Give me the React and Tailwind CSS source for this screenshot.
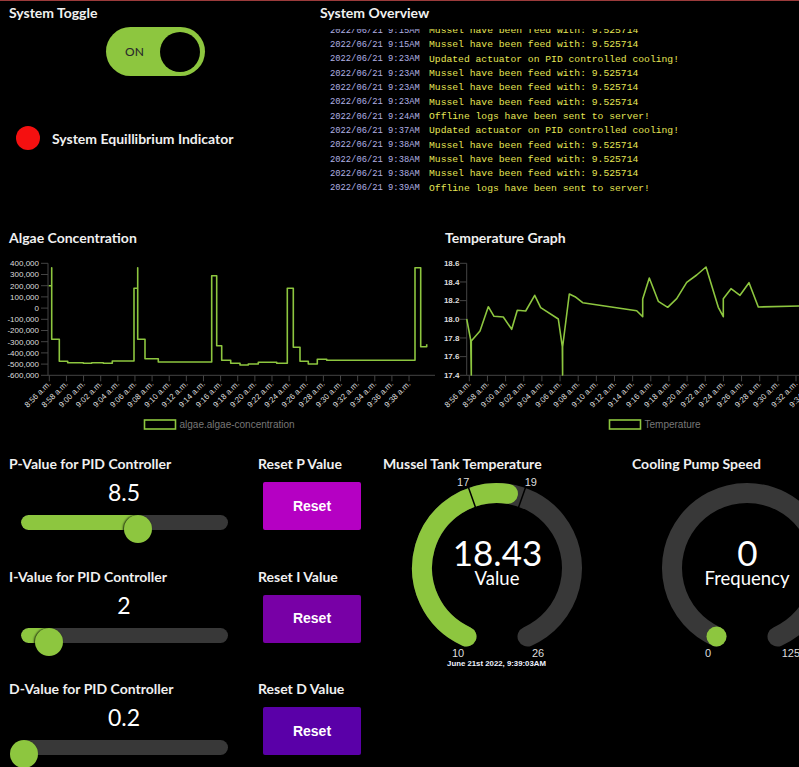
import React from "react";

const GREEN = "#8dc63f";

const LOGS = [
  ["2022/06/21 9:15AM", "Mussel have been feed with: 9.525714"],
  ["2022/06/21 9:15AM", "Mussel have been feed with: 9.525714"],
  ["2022/06/21 9:23AM", "Updated actuator on PID controlled cooling!"],
  ["2022/06/21 9:23AM", "Mussel have been feed with: 9.525714"],
  ["2022/06/21 9:23AM", "Mussel have been feed with: 9.525714"],
  ["2022/06/21 9:23AM", "Mussel have been feed with: 9.525714"],
  ["2022/06/21 9:24AM", "Offline logs have been sent to server!"],
  ["2022/06/21 9:37AM", "Updated actuator on PID controlled cooling!"],
  ["2022/06/21 9:38AM", "Mussel have been feed with: 9.525714"],
  ["2022/06/21 9:38AM", "Mussel have been feed with: 9.525714"],
  ["2022/06/21 9:38AM", "Mussel have been feed with: 9.525714"],
  ["2022/06/21 9:39AM", "Offline logs have been sent to server!"],
];

const ALGAE_PATH =
  "M48.7,285.7 H51.7 V267.7 V339.3 H59.3 V361.3 H67.7 V362.7 H83.3 V363.3 H91.7 V362.7 H103.3 V363.3 H112.3 V361 H134 V288.3 H137.7 V267.7 V339.3 H145 V358.7 H158.3 V362 H211.7 V275.7 H216.7 V345.7 H221.7 V360.3 H230.7 V363.3 H240 V365 H248.3 V364 H258.3 V362.3 H276.7 V363.3 H287.3 V288.3 H293.3 V347.3 H300 V361.3 H308.3 V364 H317.3 V359.3 H326.7 V360.3 H415 V267.7 H420.7 V346.7 H426.7 V344.3";

const TEMP_PATH =
  "M466.7,319 L470.7,340 L471.3,375 L471.3,341 L480,331 L488.3,306.7 L494,316.3 L503.3,317 L511.7,329.3 L517.3,310.3 L525.7,311 L534.7,295.3 L540.7,307.7 L558.3,319 L562.3,346.7 L562.6,375 L562.6,347 L569.3,294 L575,296.7 L582.7,302.7 L636.7,310.7 L642.7,316.7 L642.7,299 L649.3,278 L658.3,301.3 L667.7,307.3 L676.7,298.7 L686.7,282.3 L696.7,275 L706,267 L718.3,307.3 L723.3,316.7 L723.3,298.7 L731,288.7 L740,295.3 L749,282.7 L758.3,307 L799,306";

const timeLabel = (i) => {
  const m = 56 + i * 2;
  const h = m >= 60 ? 9 : 8;
  const mm = String(m % 60).padStart(2, "0");
  return `${h}:${mm} a.m.`;
};

function Chart({ x0, width, axisX, yLabels, labelRight, labelWeight, tickStart, tickStep, path, legendX, legend }) {
  const top = 263.3;
  const bottom = 375.3;
  const step = (bottom - top) / (yLabels.length - 1);
  return (
    <svg
      width={width}
      height={199}
      viewBox={`${x0} 246 ${width} 199`}
      className="block"
      style={{ fontFamily: '"Liberation Sans", Arial, sans-serif' }}
    >
      <line x1={axisX} y1={top} x2={axisX} y2={bottom} stroke="#444" strokeWidth="1" />
      <line x1={axisX} y1={bottom} x2={x0 + width} y2={bottom} stroke="#444" strokeWidth="1" />
      {yLabels.map((l, i) => (
        <g key={l}>
          <line x1={axisX - 7} y1={top + i * step} x2={axisX} y2={top + i * step} stroke="#444" />
          <text
            x={labelRight}
            y={top + i * step}
            dy="0.35em"
            textAnchor="end"
            fontSize="8"
            fontWeight={labelWeight}
            fill="#ddd"
          >
            {l}
          </text>
        </g>
      ))}
      {Array.from({ length: 22 }).map((_, i) => {
        const tx = tickStart + i * tickStep;
        return (
          <g key={i}>
            <line x1={tx} y1={bottom} x2={tx} y2={bottom + 6} stroke="#444" />
            <text
              x={tx + 2}
              y={bottom + 9}
              textAnchor="end"
              fontSize="8"
              fill="#ddd"
              transform={`rotate(-45 ${tx + 2} ${bottom + 9})`}
            >
              {timeLabel(i)}
            </text>
          </g>
        );
      })}
      <path d={path} fill="none" stroke={GREEN} strokeWidth="1.6" strokeLinejoin="round" />
      <rect x={legendX} y={420} width={31} height={9} fill="none" stroke={GREEN} strokeWidth="1.6" />
      <text x={legendX + 35} y={424.5} dy="0.35em" fontSize="10" fill="#777">
        {legend}
      </text>
    </svg>
  );
}

const pt = (cx, cy, r, deg) => {
  const a = (deg * Math.PI) / 180;
  return [cx + r * Math.sin(a), cy - r * Math.cos(a)];
};
const arc = (cx, cy, r, a1, a2) => {
  const [x1, y1] = pt(cx, cy, r, a1);
  const [x2, y2] = pt(cx, cy, r, a2);
  return `M${x1} ${y1} A${r} ${r} 0 ${a2 - a1 > 180 ? 1 : 0} 1 ${x2} ${y2}`;
};

const SPAN = 156;
const LABEL_FONT = '"Liberation Sans", Arial, sans-serif';

function Gauge({ x0, width, cx, value, min, max, label, minLabel, maxLabel, maxOffset = 41, marks = [], display, stamp }) {
  const cy = 568;
  const r = 75;
  const ang = (v) => -SPAN + ((v - min) / (max - min)) * SPAN * 2;
  const va = ang(value);
  const start = pt(cx, cy, r, -SPAN);
  return (
    <svg width={width} height={200} viewBox={`${x0} 472 ${width} 200`} className="block">
      <path d={arc(cx, cy, r, -SPAN, SPAN)} fill="none" stroke="#383838" strokeWidth="20" strokeLinecap="round" />
      {va > -SPAN + 0.5 ? (
        <path d={arc(cx, cy, r, -SPAN, va)} fill="none" stroke={GREEN} strokeWidth="20" strokeLinecap="round" />
      ) : (
        <circle cx={start[0]} cy={start[1]} r="10" fill={GREEN} />
      )}
      {marks.map((m) => {
        const a = ang(m);
        const [x1, y1] = pt(cx, cy, 64, a);
        const [x2, y2] = pt(cx, cy, 86, a);
        const [lx, ly] = pt(cx, cy, 94, a * 1.08);
        return (
          <g key={m}>
            <line x1={x1} y1={y1} x2={x2} y2={y2} stroke="#000" strokeWidth="1.5" />
            <text x={lx} y={ly + 1.5} dy="0.35em" textAnchor="middle" fontSize="11" fill="#ddd" fontFamily={LABEL_FONT}>
              {m}
            </text>
          </g>
        );
      })}
      <text x={cx - 39} y={653} dy="0.35em" textAnchor="middle" fontSize="11" fill="#ddd" fontFamily={LABEL_FONT}>
        {minLabel}
      </text>
      <text x={cx + maxOffset} y={653} dy="0.35em" textAnchor="middle" fontSize="11" fill="#ddd" fontFamily={LABEL_FONT}>
        {maxLabel}
      </text>
      <text x={cx + 0.5} y={553.5} dy="0.35em" textAnchor="middle" fontSize="35" fontWeight="400" fill="#fff" fontFamily="Lato, sans-serif">
        {display}
      </text>
      <text x={cx} y={578.5} dy="0.35em" textAnchor="middle" fontSize="18.5" fill="#fff" fontFamily="Lato, sans-serif">
        {label}
      </text>
      {stamp && (
        <text x={cx - 0.5} y={663} dy="0.35em" textAnchor="middle" fontSize="7.8" fontWeight="bold" fill="#eef2ff" fontFamily={LABEL_FONT}>
          {stamp}
        </text>
      )}
    </svg>
  );
}

function Title({ children, className = "" }) {
  return (
    <h2 className={`text-[14px] leading-4 font-bold text-[#f0f0f0] whitespace-nowrap ${className}`}>{children}</h2>
  );
}

function SliderGroup({ title, value, display }) {
  const knob = 21 + (value / 15) * 207;
  return (
    <div className="h-[112.6px]">
      <Title className="pl-[9px]">{title}</Title>
      <div className="mt-[6px] h-[28px] w-[248px] text-center text-[23px] leading-[28px] font-normal text-white">{display}</div>
      <div className="relative mt-[9px] h-[28px] w-[240px]">
        <div className="ml-[21px] mt-[6.5px] h-[15px] w-[207px] overflow-hidden rounded-full bg-[#383838]">
          <div className="h-full rounded-full bg-[#8dc63f]" style={{ width: knob - 21 + 2 }} />
        </div>
        <div
          className="absolute top-0 h-[28px] w-[28px] rounded-full bg-[#8dc63f] shadow-[-1px_0_2px_rgba(0,0,0,0.8)]"
          style={{ left: knob - 14 }}
        />
      </div>
    </div>
  );
}

function ResetGroup({ title, color }) {
  return (
    <div className="h-[112.6px]">
      <Title className="pl-[8px]">{title}</Title>
      <button
        type="button"
        className={`ml-[13px] mt-[10px] flex h-[48px] w-[98px] items-center justify-center rounded-[2px] text-[14px] font-bold text-white shadow-[0_2px_2px_rgba(0,0,0,0.5)] ${color}`}
        style={{ fontFamily: LABEL_FONT }}
      >
        Reset
      </button>
    </div>
  );
}

export default function App() {
  return (
    <div className="h-[767px] w-[799px] overflow-hidden bg-black text-white" style={{ fontFamily: "Lato, sans-serif" }}>
      <div className="h-px bg-[#9b3b3b]" />

      {/* row 1 */}
      <div className="flex h-[224px]">
        <div className="w-[310px] shrink-0">
          <Title className="pl-[9px] pt-[4px]">System Toggle</Title>
          <div className="ml-[106px] mt-[6px] flex h-[49px] w-[99px] items-center justify-between rounded-full bg-[#8dc63f] pl-[19px] pr-[5px]">
            <span className="text-[12px] font-medium text-[#2b2b2b]">ON</span>
            <span className="h-[40px] w-[40px] rounded-full bg-black" />
          </div>
          <div className="ml-[16px] mt-[50px] flex items-center gap-[12px]">
            <span className="h-[24px] w-[24px] rounded-full bg-[#f51010]" />
            <span className="text-[14px] font-bold text-[#f0f0f0]">System Equillibrium Indicator</span>
          </div>
        </div>
        <div className="min-w-0 flex-1">
          <Title className="pl-[10px] pt-[4px]">System Overview</Title>
          <div className="mt-[8px] h-[172px] overflow-hidden pl-[20px]">
            <div className="mt-[-5px]" style={{ fontFamily: '"Liberation Mono", "DejaVu Sans Mono", monospace' }}>
              {LOGS.map(([d, m], i) => (
                <div key={i} className="flex h-[14.33px] items-center whitespace-nowrap">
                  <span className="w-[99px] shrink-0 text-[8.8px] text-[#b0b0e4]">{d}</span>
                  <span className="text-[9.7px] text-[#e6e655]">{m}</span>
                </div>
              ))}
            </div>
          </div>
        </div>
      </div>

      {/* row 2 */}
      <div className="flex h-[220px]">
        <div className="w-[435px] shrink-0">
          <Title className="pl-[9px] pt-[5px]">Algae Concentration</Title>
          <Chart
            x0={0}
            width={435}
            axisX={48}
            labelRight={39}
            labelWeight="normal"
            yLabels={["400,000", "300,000", "200,000", "100,000", "0", "-100,000", "-200,000", "-300,000", "-400,000", "-500,000", "-600,000"]}
            tickStart={49.3}
            tickStep={17.13}
            path={ALGAE_PATH}
            legendX={144.5}
            legend="algae.algae-concentration"
          />
        </div>
        <div className="min-w-0 flex-1 overflow-hidden">
          <Title className="pl-[10px] pt-[5px]">Temperature Graph</Title>
          <Chart
            x0={435}
            width={364}
            axisX={466.7}
            labelRight={459.5}
            labelWeight="bold"
            yLabels={["18.6", "18.4", "18.2", "18.0", "17.8", "17.6", "17.4"]}
            tickStart={469.3}
            tickStep={18.15}
            path={TEMP_PATH}
            legendX={609.5}
            legend="Temperature"
          />
        </div>
      </div>

      {/* row 3 */}
      <div className="flex pt-[11px]">
        <div className="w-[250px] shrink-0">
          <SliderGroup title="P-Value for PID Controller" value={8.5} display="8.5" />
          <SliderGroup title="I-Value for PID Controller" value={2} display="2" />
          <SliderGroup title="D-Value for PID Controller" value={0.2} display="0.2" />
        </div>
        <div className="w-[125px] shrink-0">
          <ResetGroup title="Reset P Value" color="bg-[#b500c3]" />
          <ResetGroup title="Reset I Value" color="bg-[#7800a6]" />
          <ResetGroup title="Reset D Value" color="bg-[#5a00a8]" />
        </div>
        <div className="w-[250px] shrink-0">
          <Title className="pl-[8px]">Mussel Tank Temperature</Title>
          <Gauge
            x0={375}
            width={250}
            cx={497}
            value={18.43}
            min={10}
            max={26}
            marks={[17, 19]}
            minLabel="10"
            maxLabel="26"
            display="18.43"
            label="Value"
            stamp="June 21st 2022, 9:39:03AM"
          />
        </div>
        <div className="min-w-0 flex-1 overflow-hidden">
          <Title className="pl-[7px]">Cooling Pump Speed</Title>
          <Gauge
            x0={625}
            width={174}
            cx={747}
            value={0}
            min={0}
            max={1250}
            minLabel="0"
            maxLabel="1250"
            maxOffset={47}
            display="0"
            label="Frequency"
          />
        </div>
      </div>
    </div>
  );
}
